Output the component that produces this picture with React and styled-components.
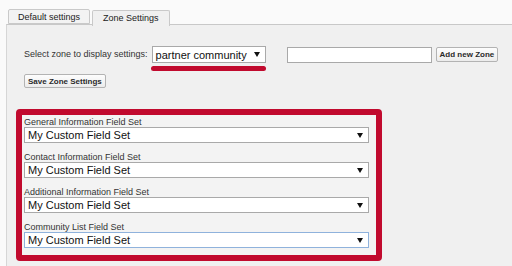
import React from "react";
import styled, { createGlobalStyle } from "styled-components";

const GlobalStyle = createGlobalStyle`
  html, body {
    margin: 0;
    padding: 0;
    background: #fafafa;
    font-family: "Liberation Sans", Arial, sans-serif;
    overflow: hidden;
  }
`;

const Page = styled.div`
  width: 512px;
  height: 266px;
  display: flex;
  flex-direction: column;
`;

const TabBar = styled.div`
  display: flex;
  align-items: flex-start;
  gap: 2px;
  padding: 9px 0 0 8px;
  height: 15px;
  position: relative;
  z-index: 1;
`;

const Tab = styled.div`
  box-sizing: border-box;
  height: ${({ active }) => (active ? "16px" : "15px")};
  margin-top: ${({ active }) => (active ? "1px" : "0")};
  padding: 0 ${({ active }) => (active ? "10px" : "9px")};
  font-size: 9px;
  line-height: 14px;
  color: #222;
  background: ${({ active }) => (active ? "#f0f0f0" : "#f3f3f3")};
  border: 1px solid #c9c9c9;
  border-bottom: ${({ active }) => (active ? "none" : "1px solid #c9c9c9")};
  border-radius: 2px 2px 0 0;
`;

const Panel = styled.div`
  flex: 1;
  margin-left: 6px;
  background: #f0f0f0;
  border-top: 1px solid #c8c8c8;
  border-left: 1px solid #d6d6d6;
  padding: 21px 0 0 9px;
`;

const ZoneArea = styled.div`
  padding-left: 8px;
`;

const ZoneRow = styled.div`
  display: flex;
  align-items: flex-start;
`;

const Label = styled.span`
  font-size: 9px;
  line-height: 17px;
  color: #333;
  margin-right: 4px;
`;

const SelectColumn = styled.div`
  display: flex;
  flex-direction: column;
`;

const SelectBox = styled.div`
  box-sizing: border-box;
  display: flex;
  align-items: center;
  justify-content: space-between;
  width: ${({ w }) => w}px;
  height: ${({ h }) => h}px;
  padding: 0 5px 0 3px;
  background: #fff;
  border: 1px solid ${({ focused }) => (focused ? "#8fb2dc" : "#a9a9a9")};
  font-size: 11px;
  color: #111;
`;

const Arrow = styled.span`
  width: 0;
  height: 0;
  border-left: 3px solid transparent;
  border-right: 3px solid transparent;
  border-top: 5px solid #111;
`;

const Underline = styled.div`
  height: 5px;
  margin: 3px 0 0 -1px;
  background: #c10a2e;
  border-radius: 3px;
`;

const TextInput = styled.div`
  box-sizing: border-box;
  width: 145px;
  height: 16px;
  margin: 1px 4px 0 21px;
  background: #fff;
  border: 1px solid #a9a9a9;
`;

const Button = styled.div`
  box-sizing: border-box;
  height: ${({ h }) => h}px;
  margin-top: ${({ mt }) => mt || 0}px;
  padding: 0 3px;
  display: inline-flex;
  align-items: center;
  font-size: 8px;
  font-weight: bold;
  color: #2a2a2a;
  background: linear-gradient(#fdfdfd, #ececec);
  border: 1px solid #b3b3b3;
  border-radius: 2px;
`;

const SaveRow = styled.div`
  display: flex;
  margin-top: 3px;
`;

const FieldBox = styled.div`
  box-sizing: border-box;
  width: 366px;
  margin-top: 21px;
  padding: 2px 7px 7px 2px;
  border: 6px solid #c10a2e;
  border-radius: 4px;
  background: #f3f3f3;
  display: flex;
  flex-direction: column;
  gap: 9px;
`;

const Field = styled.div`
  display: flex;
  flex-direction: column;
`;

const FieldLabel = styled.div`
  font-size: 9px;
  line-height: 10px;
  color: #333;
`;

const fieldSets = [
  "General Information Field Set",
  "Contact Information Field Set",
  "Additional Information Field Set",
  "Community List Field Set",
];

export default function App() {
  return (
    <Page>
      <GlobalStyle />
      <TabBar>
        <Tab>Default settings</Tab>
        <Tab active>Zone Settings</Tab>
      </TabBar>
      <Panel>
        <ZoneArea>
          <ZoneRow>
            <Label>Select zone to display settings:</Label>
            <SelectColumn>
              <SelectBox w={114} h={17}>
                partner community
                <Arrow />
              </SelectBox>
              <Underline />
            </SelectColumn>
            <TextInput />
            <Button h={15} mt={1}>Add new Zone</Button>
          </ZoneRow>
          <SaveRow>
            <Button h={14}>Save Zone Settings</Button>
          </SaveRow>
        </ZoneArea>
        <FieldBox>
          {fieldSets.map((name, i) => (
            <Field key={name}>
              <FieldLabel>{name}</FieldLabel>
              <SelectBox w={345} h={16} focused={i === fieldSets.length - 1}>
                My Custom Field Set
                <Arrow />
              </SelectBox>
            </Field>
          ))}
        </FieldBox>
      </Panel>
    </Page>
  );
}
